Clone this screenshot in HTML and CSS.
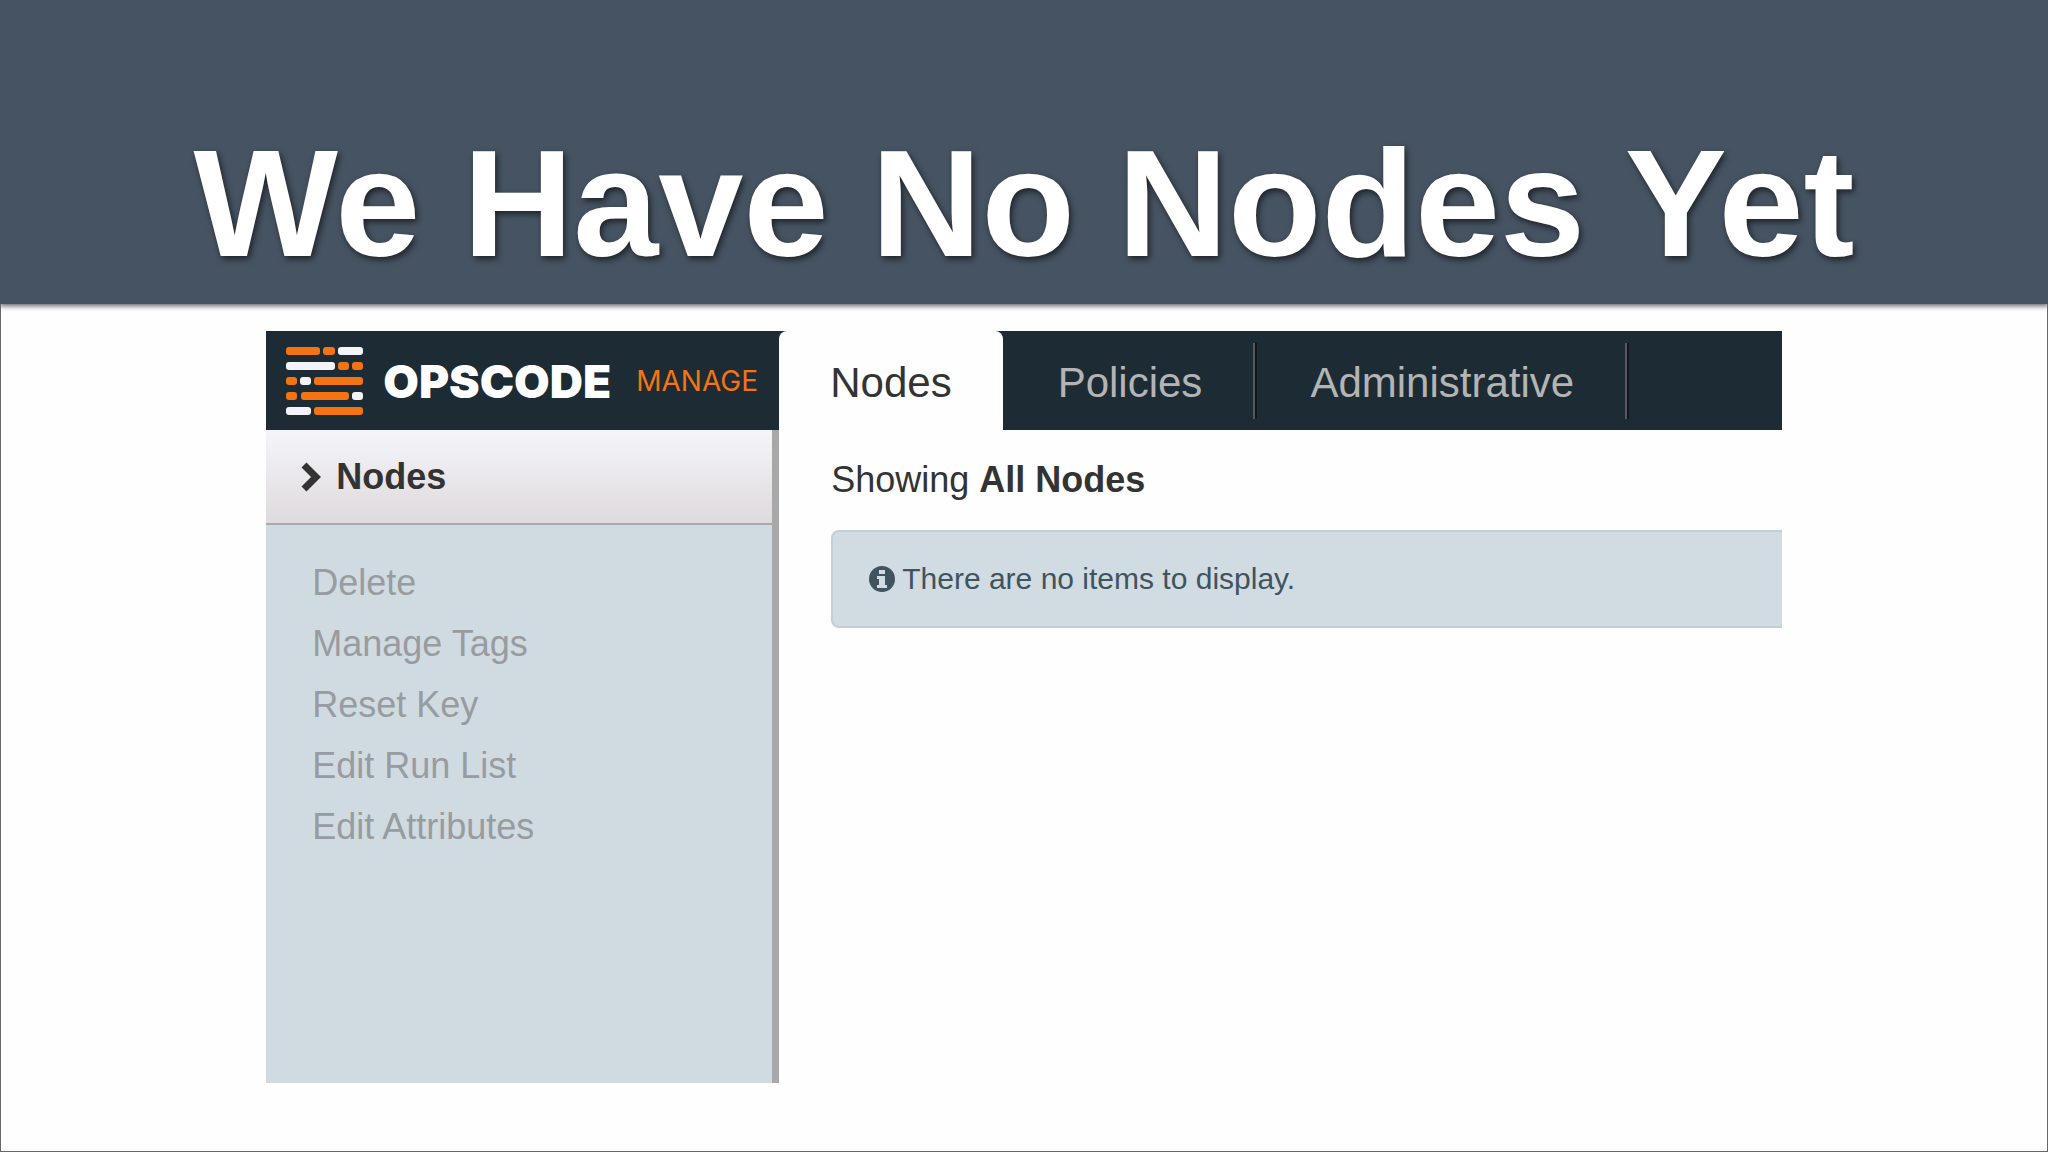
FILE: index.html
```
<!DOCTYPE html>
<html lang="en">
<head>
    <meta charset="UTF-8">
    <meta name="viewport" content="width=device-width, initial-scale=1.0">
    <title>We Have No Nodes Yet</title>
    <link rel="stylesheet" href="styles.css">
</head>
<body>
    <header class="banner">
        <h1>We Have No Nodes Yet</h1>
    </header>
    <div class="slide">
        <div class="app">
            <div class="topbar">
                <a class="brand" href="#">
                    <svg class="logo" viewBox="0 0 77 68" aria-hidden="true">
                        <g fill="#f47414">
                            <rect x="0" y="0" width="34" height="8" rx="3"/>
                            <rect x="37" y="0" width="12" height="8" rx="3"/>
                            <rect x="52" y="15" width="11" height="8" rx="3"/>
                            <rect x="66" y="15" width="11" height="8" rx="3"/>
                            <rect x="0" y="30" width="11" height="8" rx="3"/>
                            <rect x="28" y="30" width="49" height="8" rx="3"/>
                            <rect x="0" y="45" width="11" height="8" rx="3"/>
                            <rect x="15" y="45" width="48" height="8" rx="3"/>
                            <rect x="28" y="60" width="49" height="8" rx="3"/>
                        </g>
                        <g fill="#f3f3f8">
                            <rect x="52" y="0" width="25" height="8" rx="3"/>
                            <rect x="0" y="15" width="49" height="8" rx="3"/>
                            <rect x="14" y="30" width="11" height="8" rx="3"/>
                            <rect x="66" y="45" width="11" height="8" rx="3"/>
                            <rect x="0" y="60" width="25" height="8" rx="3"/>
                        </g>
                    </svg>
                    <span class="name">OPSCODE</span>
                    <span class="product">MANAGE</span>
                </a>
                <nav class="tabs">
                    <a class="active" href="#">Nodes</a>
                    <a href="#">Policies</a>
                    <a href="#">Administrative</a>
                </nav>
            </div>
            <div class="content">
                <aside class="sidebar">
                    <h2>
                        <svg class="chevron" viewBox="0 0 22 32" aria-hidden="true">
                            <path d="M3 4 L15 16 L3 28" fill="none" stroke="#333" stroke-width="7"/>
                        </svg>
                        Nodes
                    </h2>
                    <ul class="actions">
                        <li><a href="#">Delete</a></li>
                        <li><a href="#">Manage Tags</a></li>
                        <li><a href="#">Reset Key</a></li>
                        <li><a href="#">Edit Run List</a></li>
                        <li><a href="#">Edit Attributes</a></li>
                    </ul>
                </aside>
                <main class="list">
                    <p class="showing">Showing <b>All Nodes</b></p>
                    <div class="alert">
                        <svg class="info" viewBox="0 0 26 26" aria-hidden="true">
                            <circle cx="13" cy="13" r="13" fill="#3f545f"/>
                            <path d="M10 4h6v4h-6z M8 10h8v9h2v3H8v-3h2v-6H8z" fill="#d0dbe2"/>
                        </svg>
                        There are no items to display.
                    </div>
                </main>
            </div>
        </div>
    </div>
</body>
</html>
```
FILE: styles.css
```
* {
    margin: 0;
    padding: 0;
    box-sizing: border-box;
}
body {
    display: flex;
    flex-direction: column;
    min-height: 100vh;
    background-color: #fefefe;
    font-family: "Liberation Sans", Arial, sans-serif;
    font-size: 36px;
    color: #333;
}
a {
    color: inherit;
    text-decoration: none;
}
ul {
    list-style: none;
}

/* title */
.banner {
    padding: 115px 20px 13px;
    background-color: #465362;
    box-shadow: 0 2px 5px rgba(30, 25, 40, 0.7);
    text-align: center;
}
.banner h1 {
    font-size: 153px;
    line-height: 176px;
    color: #fff;
    text-shadow: 2px 3px 6px rgba(0, 0, 0, 0.6);
}
.slide {
    display: flex;
    flex: 1;
    justify-content: center;
    padding: 27px 0 68px;
    border: 1px solid #68686c;
    border-top: 0;
}
.app {
    display: flex;
    flex-direction: column;
    width: 74vw;
}

/* top bar */
.topbar {
    display: flex;
    height: 99px;
    background-color: #1c2b34;
}
.brand {
    display: flex;
    align-items: center;
    width: 513px;
    padding-left: 20px;
    font-family: Inter, sans-serif;
}
.logo {
    width: 77px;
    height: 68px;
    margin-right: 20px;
}
.name {
    font-size: 46px;
    font-weight: 900;
    color: #fff;
}
.product {
    margin-left: 25px;
    font-size: 28px;
    color: #f47414;
}
.tabs {
    display: flex;
    align-items: center;
    font-size: 42px;
    color: #b4b4b6;
}
.tabs a {
    padding: 4px 51px 0 55px;
    border-right: 2px solid #55585c;
    box-shadow: 2px 0 0 #10181d;
    line-height: 72px;
}
.tabs .active {
    padding: 4px 51px 0;
    border: 0;
    border-radius: 8px 8px 0 0;
    box-shadow: none;
    background-color: #fefefe;
    line-height: 95px;
    color: #333;
}

/* page */
.content {
    display: flex;
    flex: 1;
}
.sidebar {
    width: 513px;
    border-right: 7px solid #a8a8aa;
    background-color: #d0dae1;
}
.sidebar h2 {
    display: flex;
    align-items: center;
    height: 95px;
    padding-left: 35px;
    border-bottom: 2px solid #aaa8aa;
    background: linear-gradient(#f5f5f9, #dedadd);
    font-size: 36px;
}
.chevron {
    width: 22px;
    height: 32px;
    margin-right: 13px;
}
.actions {
    padding: 27px 46px;
    line-height: 61px;
    color: #989ca0;
}
.list {
    flex: 1;
    padding: 29px 0 0 52px;
}
.showing {
    margin-bottom: 29px;
    line-height: 42px;
}
.alert {
    display: flex;
    align-items: center;
    height: 98px;
    padding-left: 36px;
    border: 2px solid #c2ced8;
    border-right: 0;
    border-radius: 8px 0 0 8px;
    background-color: #d0dbe2;
    font-size: 30px;
    color: #3f545f;
}
.info {
    width: 26px;
    height: 26px;
    margin-right: 7px;
}
```
